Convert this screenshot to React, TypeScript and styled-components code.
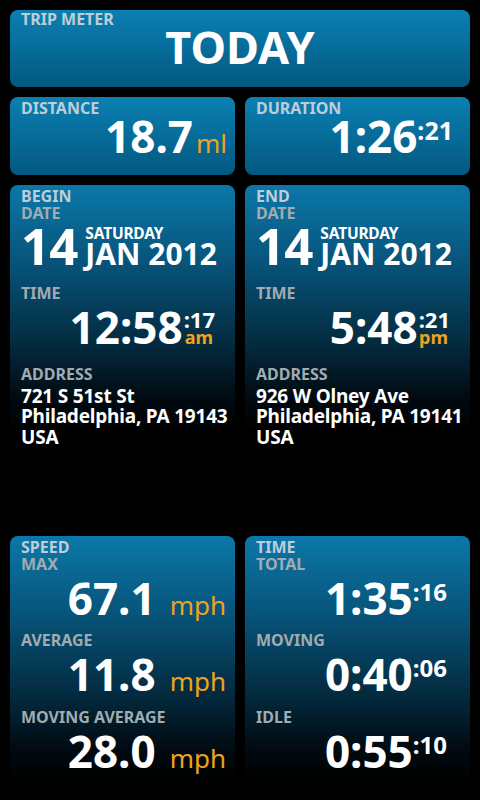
import styled, { createGlobalStyle } from "styled-components";

const GlobalStyle = createGlobalStyle`
  html, body {
    margin: 0;
    background: #000;
  }
  body {
    font-family: "Noto Sans", "Open Sans", sans-serif;
    overflow: hidden;
  }
`;

const Screen = styled.div`
  width: 480px;
  height: 800px;
  box-sizing: border-box;
  padding: 10px;
  overflow: hidden;
  background: #000;
  display: flex;
  flex-direction: column;
  gap: 10px;
`;

const Row = styled.div`
  display: grid;
  grid-template-columns: 225px 225px;
  gap: 10px;
  flex-shrink: 0;
`;

const Card = styled.div<{ $h: number; $fade?: boolean; $top?: number }>`
  height: ${(p) => p.$h}px;
  box-sizing: border-box;
  padding: ${(p) => p.$top ?? 3}px 0 0 11px;
  border-radius: 8px;
  flex-shrink: 0;
  background: ${(p) =>
    p.$fade
      ? "linear-gradient(to bottom, #0b78a9 0%, #075075 25%, #03283b 48%, #010b12 62%, #000 72%)"
      : "linear-gradient(to bottom, #0b80b2 0%, #066a97 55%, #03587f 100%)"};
`;

const Label = styled.div<{ $dim?: boolean; $gap?: number }>`
  font-size: 16px;
  line-height: 17px;
  font-weight: 700;
  margin-top: ${(p) => p.$gap ?? 0}px;
  color: ${(p) => (p.$dim ? "#a1abb2" : "#bfcdd8")};
  white-space: nowrap;
`;

const Title = styled.div`
  font-size: 45px;
  line-height: 37px;
  font-weight: 700;
  color: #fff;
  text-align: center;
  padding-right: 11px;
`;

// big number with its small parts, set to the right of the card
const Value = styled.div<{ $lh: number; $right: number; $gap?: number }>`
  display: flex;
  justify-content: flex-end;
  align-items: flex-start;
  margin-top: ${(p) => p.$gap ?? 0}px;
  padding-right: ${(p) => p.$right}px;
  color: #fff;
  font-weight: 700;
  font-size: 44px;
  line-height: ${(p) => p.$lh}px;
  white-space: nowrap;
`;

const Sup = styled.span<{ $size: number; $lh: number }>`
  font-size: ${(p) => p.$size}px;
  line-height: ${(p) => p.$lh}px;
  font-weight: 700;
  color: #fff;
`;

const UnitValue = styled.div<{ $lh: number; $right: number; $gap?: number }>`
  display: flex;
  justify-content: flex-end;
  align-items: baseline;
  margin-top: ${(p) => p.$gap ?? 0}px;
  padding-right: ${(p) => p.$right}px;
  color: #fff;
  font-weight: 700;
  font-size: 44px;
  line-height: ${(p) => p.$lh}px;
  white-space: nowrap;
`;

const Unit = styled.span<{ $size: number; $space: number }>`
  font-size: ${(p) => p.$size}px;
  line-height: 1;
  font-weight: 400;
  color: #eda31f;
  margin-left: ${(p) => p.$space}px;
`;

const DateRow = styled.div`
  display: flex;
  align-items: last baseline;
  gap: 8px;
  color: #fff;
  font-weight: 700;
`;

const Day = styled.div`
  font-size: 51px;
  line-height: 46px;
  letter-spacing: -1px;
`;

const DateStack = styled.div`
  display: flex;
  flex-direction: column;
`;

const Weekday = styled.div`
  font-size: 15.5px;
  line-height: 20.5px;
  letter-spacing: -0.2px;
`;

const MonthYear = styled.div`
  font-size: 30px;
  line-height: 22px;
`;

const ClockStack = styled.div`
  display: flex;
  flex-direction: column;
  align-items: flex-end;
  margin-left: 1px;
`;

const Meridiem = styled.span`
  font-size: 18px;
  line-height: 4.9px;
  color: #eda31f;
  font-weight: 700;
  margin-right: 2px;
`;

const Address = styled.div`
  margin-top: 3.3px;
  font-size: 19px;
  line-height: 20.5px;
  letter-spacing: -0.2px;
  font-weight: 700;
  color: #fff;
  white-space: nowrap;
`;

type Endpoint = {
  title: string;
  weekday: string;
  day: string;
  monthYear: string;
  clock: string;
  seconds: string;
  meridiem: string;
  lines: string[];
};

const begin: Endpoint = {
  title: "BEGIN",
  weekday: "SATURDAY",
  day: "14",
  monthYear: "JAN 2012",
  clock: "12:58",
  seconds: ":17",
  meridiem: "am",
  lines: ["721 S 51st St", "Philadelphia, PA 19143", "USA"],
};

const end: Endpoint = {
  title: "END",
  weekday: "SATURDAY",
  day: "14",
  monthYear: "JAN 2012",
  clock: "5:48",
  seconds: ":21",
  meridiem: "pm",
  lines: ["926 W Olney Ave", "Philadelphia, PA 19141", "USA"],
};

function EndpointCard({ data }: { data: Endpoint }) {
  return (
    <Card $h={341} $fade>
      <Label>{data.title}</Label>
      <Label $dim>DATE</Label>
      <DateRow>
        <Day>{data.day}</Day>
        <DateStack>
          <Weekday>{data.weekday}</Weekday>
          <MonthYear>{data.monthYear}</MonthYear>
        </DateStack>
      </DateRow>
      <Label $dim $gap={16.7}>
        TIME
      </Label>
      <Value $lh={44} $right={20} $gap={3.6}>
        {data.clock}
        <ClockStack>
          <Sup $size={22} $lh={29.7}>
            {data.seconds}
          </Sup>
          <Meridiem>{data.meridiem}</Meridiem>
        </ClockStack>
      </Value>
      <Label $dim $gap={16.4}>
        ADDRESS
      </Label>
      <Address>
        {data.lines.map((l) => (
          <div key={l}>{l}</div>
        ))}
      </Address>
    </Card>
  );
}

const speeds = [
  { label: "MAX", value: "67.1" },
  { label: "AVERAGE", value: "11.8" },
  { label: "MOVING AVERAGE", value: "28.0" },
];

const times = [
  { label: "TOTAL", value: "1:35", sec: ":16" },
  { label: "MOVING", value: "0:40", sec: ":06" },
  { label: "IDLE", value: "0:55", sec: ":10" },
];

export default function App() {
  return (
    <>
      <GlobalStyle />
      <Screen>
        <Card $h={77} $top={1}>
          <Label>TRIP METER</Label>
          <Title>TODAY</Title>
        </Card>

        <Row>
          <Card $h={78}>
            <Label>DISTANCE</Label>
            <UnitValue $lh={38.7} $right={8}>
              18.7
              <Unit $size={26} $space={3}>
                ml
              </Unit>
            </UnitValue>
          </Card>
          <Card $h={78}>
            <Label>DURATION</Label>
            <Value $lh={38.7} $right={17}>
              1:26
              <Sup $size={25} $lh={26.3}>
                :21
              </Sup>
            </Value>
          </Card>
        </Row>

        <Row>
          <EndpointCard data={begin} />
          <EndpointCard data={end} />
        </Row>

        <Row>
          <Card $h={341} $fade>
            <Label>SPEED</Label>
            {speeds.map((s, i) => (
              <div key={s.label}>
                <Label $dim $gap={i === 0 ? 0 : 8.2}>
                  {s.label}
                </Label>
                <UnitValue $lh={51.3} $right={9}>
                  {s.value}
                  <Unit $size={26} $space={14}>
                    mph
                  </Unit>
                </UnitValue>
              </div>
            ))}
          </Card>
          <Card $h={341} $fade>
            <Label>TIME</Label>
            {times.map((t, i) => (
              <div key={t.label}>
                <Label $dim $gap={i === 0 ? 0 : 8.2}>
                  {t.label}
                </Label>
                <Value $lh={51.3} $right={23}>
                  {t.value}
                  <Sup $size={24} $lh={37.9}>
                    {t.sec}
                  </Sup>
                </Value>
              </div>
            ))}
          </Card>
        </Row>
      </Screen>
    </>
  );
}
